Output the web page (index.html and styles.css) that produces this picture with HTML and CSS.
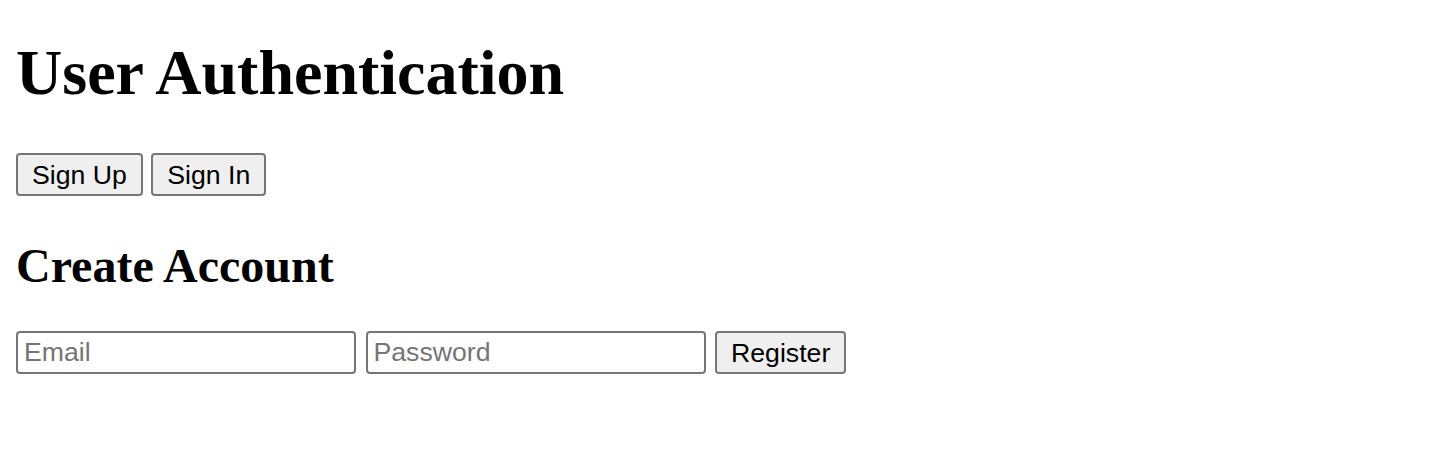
FILE: index.html
```html
<!DOCTYPE html>
<html lang="en">
<head>
<meta charset="utf-8">
<title>User Authentication</title>
<link rel="stylesheet" href="styles.css">
</head>
<body>
  <h1 class="title">User Authentication</h1>
  <div class="tabs">
    <button class="btn" type="button">Sign Up</button>
    <button class="btn" type="button">Sign In</button>
  </div>
  <h2 class="subtitle">Create Account</h2>
  <form class="form">
    <input class="field" type="email" placeholder="Email">
    <input class="field" type="password" placeholder="Password">
    <button class="btn" type="button">Register</button>
  </form>
</body>
</html>
```

FILE: styles.css
```css
html, body {
  margin: 0;
  padding: 0;
  background: #ffffff;
}

body {
  padding: 0 16px;
  font-family: "Liberation Serif", "Times New Roman", serif;
  color: #000000;
}

.title {
  font-size: 64px;
  font-weight: bold;
  line-height: 71px;
  margin: 37px 0 45px;
}

.tabs,
.form {
  display: flex;
  align-items: flex-start;
  gap: 8.5px;
}

.form {
  gap: 9.5px;
  margin: 0;
}

.subtitle {
  font-size: 48px;
  font-weight: bold;
  line-height: 53px;
  margin: 43px 0 39px;
}

.btn {
  box-sizing: border-box;
  height: 43px;
  margin: 0;
  padding: 0 14px;
  font-family: "Liberation Sans", Arial, sans-serif;
  font-size: 26.67px;
  line-height: 38px;
  color: #000000;
  background: #efefef;
  border: 2px solid #767676;
  border-radius: 4px;
}

.field {
  box-sizing: border-box;
  width: 340px;
  height: 43px;
  margin: 0;
  padding: 0 6px;
  font-family: "Liberation Sans", Arial, sans-serif;
  font-size: 26.67px;
  line-height: 38px;
  color: #000000;
  background: #ffffff;
  border: 2px solid #767676;
  border-radius: 4px;
}

.field::placeholder {
  color: #757575;
}
```
